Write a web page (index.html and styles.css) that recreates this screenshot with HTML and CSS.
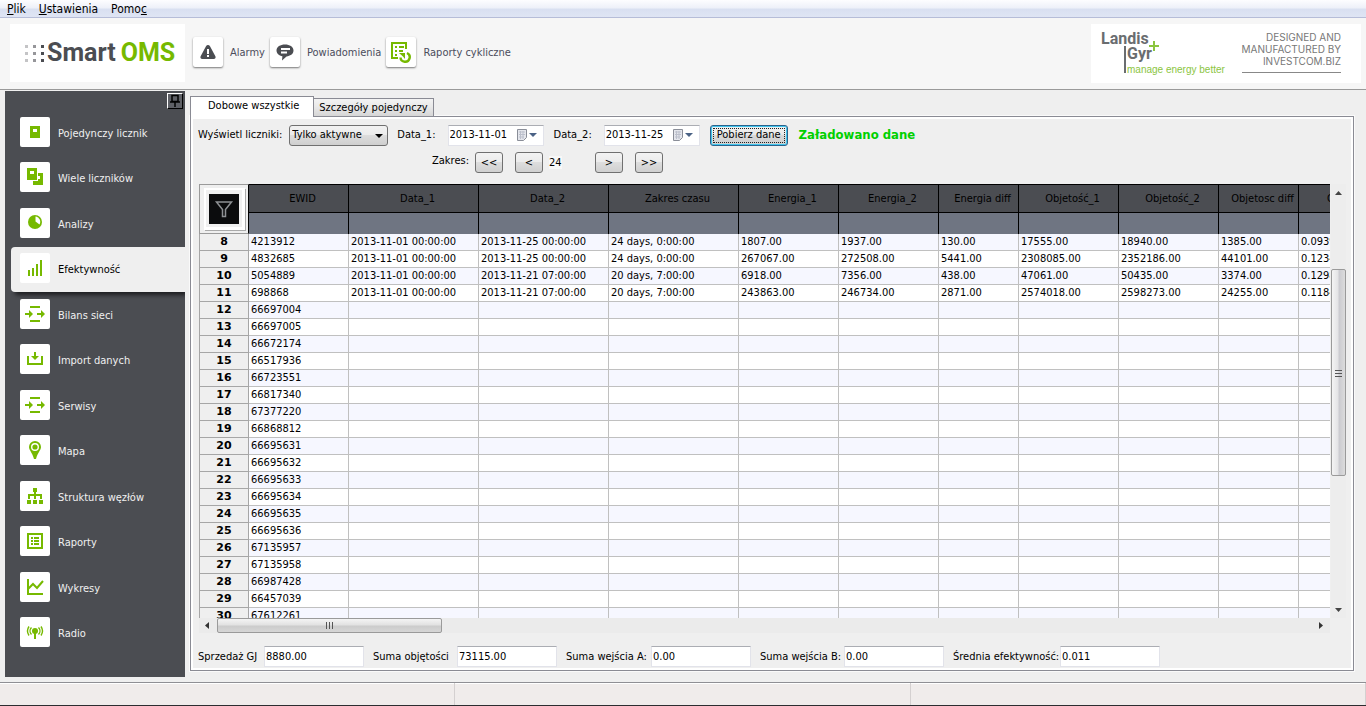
FILE: index.html
```html
<!DOCTYPE html>
<html lang="pl">
<head>
<meta charset="utf-8">
<title>Smart OMS</title>
<link rel="stylesheet" href="styles.css">
</head>
<body>
<nav class="menubar">
  <a href="#"><u>P</u>lik</a>
  <a href="#"><u>U</u>stawienia</a>
  <a href="#">Pomo<u>c</u></a>
</nav>

<header class="header">
  <div class="logo">
    <svg class="logo-dots" width="20" height="18" viewBox="0 0 20 18">
      <g fill="#c4c4c6"><path d="M0 1h3v3H0zM0 8h3v3H0zM0 15h3v3H0z"/></g>
      <g fill="#96969a"><path d="M8 1h3v3H8zM8 8h3v3H8zM8 15h3v3H8z"/></g>
      <g fill="#4b4d52"><path d="M16 1h3v3h-3zM16 8h3v3h-3zM16 15h3v3h-3z"/></g>
    </svg>
    <span class="logo-smart">Smart</span>
    <span class="logo-oms">OMS</span>
  </div>
  <div class="tools">
    <button class="tool" type="button">
      <span class="tool-icon">
        <svg width="18" height="16" viewBox="0 0 18 16"><path d="M9 1Q10.300 1 11 2.300L16.500 12.500Q17 14.800 14.800 15H3.200Q1 14.800 1.500 12.500L7 2.300Q7.700 1 9 1Z" fill="#4b4d52"/><path d="M8 5h2v5H8zM8 11h2v2H8z" fill="#fff"/></svg>
      </span>
      <span>Alarmy</span>
    </button>
    <button class="tool" type="button">
      <span class="tool-icon">
        <svg width="18" height="18" viewBox="0 0 18 18"><path d="M9 1.500C13.700 1.500 17.500 3.800 17.500 7.500S14 13 10.500 13.400L6 17.500 6.400 13.200C3 12.600.5 10.500.5 7.500.5 3.800 4.300 1.500 9 1.500Z" fill="#4b4d52"/><path d="M5 5h9v2H5zM5 8.500h6v2H5z" fill="#fff"/></svg>
      </span>
      <span>Powiadomienia</span>
    </button>
    <button class="tool" type="button">
      <span class="tool-icon">
        <svg width="22" height="22" viewBox="0 0 22 22"><path d="M8 17H2V2h14v6" fill="none" stroke="#76b900" stroke-width="2"/><path d="M5 5h2v2H5zM9 5h5v2H9zM5 9h2v2H5zM9 9h4v2H9zM5 13h2v2H5z" fill="#76b900"/><path d="M10.500 16.500A4.600 4.600 0 1 0 17 12" fill="none" stroke="#76b900" stroke-width="2.400"/><path d="M9 12h6v6l-2-2.500z" fill="#76b900"/></svg>
      </span>
      <span>Raporty cykliczne</span>
    </button>
  </div>
  <div class="brand">
    <div class="landis">
      <div class="landis-name">Landis</div>
      <div class="landis-gyr">Gyr</div>
      <div class="landis-tag">manage energy better</div>
      <svg class="landis-mark" width="60" height="44" viewBox="0 0 60 44"><path d="M23 15h2v27h-2z" fill="#6a6d70"/><path d="M52 10h2v10h-2zM48 14h10v2H48z" fill="#8bc53f"/></svg>
    </div>
    <div class="maker">DESIGNED AND<br>MANUFACTURED BY<br>INVESTCOM.BIZ</div>
  </div>
</header>

<main class="main">
  <aside class="sidebar">
    <button class="pin" type="button" aria-label="Przypnij">
      <svg width="14" height="14" viewBox="0 0 14 14"><path d="M4 1.500h6v6H4zM2 8h10M7 8v5" fill="none" stroke="#000" stroke-width="1.500"/></svg>
    </button>
    <a class="item" href="#"><span class="item-icon"><svg viewBox="0 0 30 30"><path fill-rule="evenodd" d="M10 9h10v12H10zM13 12v3h4v-3z"/></svg></span>Pojedynczy licznik</a>
    <a class="item" href="#"><span class="item-icon"><svg viewBox="0 0 30 30"><path fill-rule="evenodd" d="M7 6h10v12H7zM10 9v3h4V9z"/><path d="M18 11h5v12H13v-4h5v-2h2v-3h-2z"/></svg></span>Wiele liczników</a>
    <a class="item" href="#"><span class="item-icon"><svg viewBox="0 0 30 30"><circle cx="15" cy="14" r="7"/><path d="M15.500 13.500V8.500A5.300 5.300 0 0 1 19.500 16.500Z" fill="#fff"/></svg></span>Analizy</a>
    <a class="item active" href="#"><span class="item-icon"><svg viewBox="0 0 30 30"><path d="M8 17h2v6H8zM12 15h2v8h-2zM16 11h2v12h-2zM20 7h2v16h-2z"/></svg></span>Efektywność</a>
    <a class="item" href="#"><span class="item-icon"><svg viewBox="0 0 30 30"><path d="M10 7h10v2H10zM10 21h10v2H10zM5 14h4v-3l4 4-4 4v-3H5zM17 14h4v-3l4 4-4 4v-3h-4z"/></svg></span>Bilans sieci</a>
    <a class="item" href="#"><span class="item-icon"><svg viewBox="0 0 30 30"><path d="M7 12h2v7h12v-7h2v9H7zM14 8h2v4h3l-4 4-4-4h3z"/></svg></span>Import danych</a>
    <a class="item" href="#"><span class="item-icon"><svg viewBox="0 0 30 30"><path d="M10 7h10v2H10zM10 21h10v2H10zM5 14h4v-3l4 4-4 4v-3H5zM17 14h4v-3l4 4-4 4v-3h-4z"/></svg></span>Serwisy</a>
    <a class="item" href="#"><span class="item-icon"><svg viewBox="0 0 30 30"><path d="M15 6a6 6 0 0 1 6 6c0 3-3 5-5 12h-2c-2-7-5-9-5-12a6 6 0 0 1 6-6z"/><circle cx="15" cy="12" r="3.300" fill="none" stroke="#fff" stroke-width="1.400"/></svg></span>Mapa</a>
    <a class="item" href="#"><span class="item-icon"><svg viewBox="0 0 30 30"><path d="M13 7h4v4h-1v2h6v5h-2v-3h-4v3h-2v-3h-4v3H8v-5h6v-2h-1zM7 19h4v4H7zM13 19h4v4h-4zM19 19h4v4h-4z"/></svg></span>Struktura węzłów</a>
    <a class="item" href="#"><span class="item-icon"><svg viewBox="0 0 30 30"><path fill-rule="evenodd" d="M7 7h16v16H7zM9 9v12h12V9z"/><path d="M11 11h2v2h-2zM14 11h5v2h-5zM11 14h2v2h-2zM14 14h5v2h-5zM11 17h2v2h-2zM14 17h5v2h-5z"/></svg></span>Raporty</a>
    <a class="item" href="#"><span class="item-icon"><svg viewBox="0 0 30 30"><path d="M8 7v15h15M8 17l5-5 4 4 6-7" fill="none" stroke="#76b900" stroke-width="2"/></svg></span>Wykresy</a>
    <a class="item" href="#"><span class="item-icon"><svg viewBox="0 0 30 30"><circle cx="15" cy="14" r="3"/><path d="M14 15h2v7h-2z"/><path d="M11.500 10.500a5 5 0 0 0 0 7M9 9.500a8 8 0 0 0 0 9M18.500 10.500a5 5 0 0 1 0 7M21 9.500a8 8 0 0 1 0 9" fill="none" stroke="#76b900" stroke-width="1.400"/></svg></span>Radio</a>
  </aside>

  <section class="content">
    <div class="tabs">
      <button class="tab tab-active" type="button">Dobowe wszystkie</button>
      <button class="tab" type="button">Szczegóły pojedynczy</button>
    </div>
    <div class="panel">
      <div class="filters">
        <label class="show-label" for="show">Wyświetl liczniki:</label>
        <span class="select-wrap"><select id="show" class="select"><option>Tylko aktywne</option></select></span>
        <label for="date1">Data_1:</label>
        <span class="date">
          <input id="date1" type="text" value="2013-11-01">
          <svg width="22" height="14" viewBox="0 0 22 14"><path d="M1.500 1.500h9v8l-3 3h-6z" fill="#e4e6ec" stroke="#8a8e98"/><path d="M3 4h6M3 6.500h6M3 9h5M4.500 3v8M7 3v8" stroke="#bcc0cc"/><path d="M13 5h8l-4 4z" fill="#4a6285"/></svg>
        </span>
        <label for="date2">Data_2:</label>
        <span class="date">
          <input id="date2" type="text" value="2013-11-25">
          <svg width="22" height="14" viewBox="0 0 22 14"><path d="M1.500 1.500h9v8l-3 3h-6z" fill="#e4e6ec" stroke="#8a8e98"/><path d="M3 4h6M3 6.500h6M3 9h5M4.500 3v8M7 3v8" stroke="#bcc0cc"/><path d="M13 5h8l-4 4z" fill="#4a6285"/></svg>
        </span>
        <button class="fetch" type="button">Pobierz dane</button>
        <strong class="status">Załadowano dane</strong>
      </div>
      <div class="range">
        <span class="range-label">Zakres:</span>
        <button class="step" type="button">&lt;&lt;</button>
        <button class="step" type="button">&lt;</button>
        <span class="range-value"><span>24</span></span>
        <button class="step" type="button">&gt;</button>
        <button class="step" type="button">&gt;&gt;</button>
      </div>

      <div class="grid">
        <div class="viewport">
          <table class="data">
            <colgroup>
              <col class="w50"><col class="w100"><col class="w130"><col class="w130"><col class="w130"><col class="w100"><col class="w100"><col class="w80"><col class="w100"><col class="w100"><col class="w80"><col class="w100">
            </colgroup>
            <thead>
              <tr class="titles">
                <th class="corner" rowspan="2"><button class="funnel" type="button" aria-label="Filtr"><svg width="30" height="30" viewBox="0 0 30 30"><path d="M7.500 8h15l-6 7.500v7h-3v-7z" fill="none" stroke="#8e9194" stroke-width="1.500"/></svg></button></th>
                <th>EWID</th><th>Data_1</th><th>Data_2</th><th>Zakres czasu</th><th>Energia_1</th><th>Energia_2</th><th>Energia diff</th><th>Objetość_1</th><th>Objetość_2</th><th>Objetosc diff</th><th class="cut">O</th>
              </tr>
              <tr class="searches"><td></td><td></td><td></td><td></td><td></td><td></td><td></td><td></td><td></td><td></td><td></td></tr>
            </thead>
            <tbody id="rows"></tbody>
          </table>
        </div>
        <div class="vbar">
          <svg width="7" height="4" viewBox="0 0 7 4"><path d="M0 4h7L3.500 0z" fill="#444"/></svg>
          <div class="vtrack"><div class="vthumb"><i></i><i></i><i></i></div></div>
          <svg width="7" height="4" viewBox="0 0 7 4"><path d="M0 0h7L3.500 4z" fill="#444"/></svg>
        </div>
        <div class="hbar">
          <svg width="4" height="7" viewBox="0 0 4 7"><path d="M4 0v7L0 3.500z" fill="#333"/></svg>
          <div class="htrack"><div class="hthumb"><i></i><i></i><i></i></div></div>
          <svg width="4" height="7" viewBox="0 0 4 7"><path d="M0 0v7L4 3.500z" fill="#333"/></svg>
        </div>
      </div>

      <div class="sums">
        <label for="s1">Sprzedaż GJ</label><input id="s1" type="text" value="8880.00">
        <label for="s2">Suma objętości</label><input id="s2" type="text" value="73115.00">
        <label for="s3">Suma wejścia A:</label><input id="s3" type="text" value="0.00">
        <label for="s4">Suma wejścia B:</label><input id="s4" type="text" value="0.00">
        <label for="s5">Średnia efektywność:</label><input id="s5" type="text" value="0.011">
      </div>
    </div>
  </section>
</main>

<footer class="statusbar"><div></div><div></div><div></div></footer>
<script src="rows.js"></script>
</body>
</html>
```

FILE: styles.css
```css
* { box-sizing: border-box; }

body {
  margin: 0;
  min-height: 100vh;
  display: flex;
  flex-direction: column;
  background: #efefef;
  color: #000;
  font: 11px/14px "DejaVu Sans Condensed", "Noto Sans", sans-serif;
}

button, input, select { font: inherit; color: inherit; }

.menubar {
  display: flex;
  gap: 13px;
  height: 18px;
  padding: 2px 7px;
  font-size: 12px;
  background: linear-gradient(#fdfdff, #eef1f9 45%, #d9e0f1 55%, #dfe5f4);
  border-bottom: 1px solid #b6bdd8;
}
.menubar a { color: #000; text-decoration: none; }

.header {
  display: flex;
  align-items: center;
  height: 72px;
  padding: 0 5px 1px 10px;
  background: #f6f6f6;
  border-bottom: 1px solid #9a9a9a;
}

.logo {
  display: flex;
  align-items: center;
  width: 175px;
  height: 58px;
  padding-left: 15px;
  background: #fff;
  font: bold 25px/30px Roboto, sans-serif;
}
.logo-smart { margin: 0 5px 0 2px; color: #4b4d52; }
.logo-oms { color: #76b900; }

.tools { display: flex; gap: 5px; padding-left: 8px; }
.tool {
  display: flex;
  align-items: center;
  gap: 7px;
  padding: 0;
  border: 0;
  background: none;
  color: #4b4d5c;
}
.tool-icon {
  display: grid;
  place-items: center;
  width: 30px;
  height: 30px;
  margin-bottom: 2px;
  border-radius: 2px;
  background: #fff;
  box-shadow: 0 1px 2px #777;
}

.brand {
  display: flex;
  justify-content: space-between;
  margin-left: auto;
  width: 270px;
  height: 59px;
  padding: 7px 20px 10px 10px;
  background: #fff;
}
.landis {
  position: relative;
  color: #6a6d70;
  font: bold 16px/16px Roboto, sans-serif;
}
.landis-gyr { padding-left: 26px; line-height: 14px; }
.landis-tag {
  padding: 3px 0 0 26px;
  color: #8bc53f;
  font: 10px/12px "Liberation Sans", sans-serif;
}
.landis-mark { position: absolute; left: 0; top: 0; }
.maker {
  border-bottom: 1px solid #888;
  color: #777;
  text-align: right;
  font: 10px/12px Inter, sans-serif;
}

.main {
  display: flex;
  flex: 1;
  gap: 5px;
  padding: 1px 11px 5px 5px;
}

.sidebar {
  position: relative;
  display: flex;
  flex-direction: column;
  width: 180px;
  padding: 19px 0 21px 6px;
  background: #4b4d52;
}
.pin {
  position: absolute;
  top: 2px;
  right: 2px;
  display: grid;
  place-items: center;
  width: 16px;
  height: 16px;
  padding: 0;
  border: 1px solid;
  border-color: #fff #000 #000 #fff;
  background: #5e6066;
}
.item {
  display: flex;
  flex: 1;
  align-items: center;
  gap: 8px;
  padding: 2px 0 0 9px;
  color: #f0f0f0;
  text-decoration: none;
}
.item-icon {
  width: 30px;
  height: 30px;
  margin-bottom: 4px;
  border-radius: 2px;
  background: #fff;
}
.item-icon svg { display: block; fill: #76b900; }
.active {
  border-radius: 4px 0 0 4px;
  background: #efefef;
  color: #000;
  box-shadow: 3px 4px 4px -1px #1d1e21;
  clip-path: inset(0 0 -8px 0);
}

.content {
  display: flex;
  flex: 1;
  flex-direction: column;
  min-width: 0;
  padding: 5px 1px 6px 0;
}
.tabs { display: flex; align-items: flex-end; height: 21px; z-index: 1; }
.tab {
  height: 19px;
  padding: 0 5px;
  border: 1px solid #8a8b94;
  border-left: 0;
  background: linear-gradient(#f3f3f3, #e9e9e9 45%, #d6d6d6);
}
.tab-active {
  height: 21px;
  padding: 0 14px 2px 17px;
  border-left: 1px solid #8a8b94;
  border-bottom: 0;
  background: #fff;
}
.panel {
  display: flex;
  flex: 1;
  flex-direction: column;
  margin-top: -1px;
  padding: 7px 4px 2px 5px;
  border: 1px solid #8a8b94;
  outline: 1px solid #fafafa;
  box-shadow: inset 0 0 0 2px #fff;
}

.filters { display: flex; align-items: center; height: 22px; padding-left: 2px; }
.filters label { margin-right: 12px; }
.filters .show-label { margin-right: 7px; }
.select-wrap { position: relative; margin-right: 9px; }
.select-wrap::after {
  content: "";
  position: absolute;
  right: 5px;
  top: 9px;
  border: 4px solid transparent;
  border-top-color: #000;
  pointer-events: none;
}
.select {
  appearance: none;
  display: block;
  width: 99px;
  height: 21px;
  padding: 0 2px;
  border: 1px solid #707070;
  border-radius: 3px;
  background: linear-gradient(#f2f2f2, #ebebeb 49%, #dcdcdc 50%, #cfcfcf);
}
.date {
  display: flex;
  align-items: center;
  width: 96px;
  height: 21px;
  margin-right: 10px;
  border: 1px solid #e2e3ea;
  border-top-color: #abadb3;
  background: #fff;
}
.date input { width: 67px; padding: 0 1px; border: 0; background: none; }
.fetch {
  height: 21px;
  margin: 0 11px 0 0;
  padding: 0 6px;
  border: 1px solid #2c628b;
  border-radius: 3px;
  background: linear-gradient(#f2f2f2, #e8e8e8 49%, #d8d8d8 50%, #cfcfcf);
  box-shadow: inset 0 0 0 1px #3fc5ee;
  outline: 1px dotted #222;
  outline-offset: -4px;
}
.status { color: #00d000; font: bold 13px/16px "DejaVu Sans Condensed", sans-serif; }

.range {
  display: flex;
  align-items: center;
  height: 21px;
  margin: 6px 0 11px;
  padding-left: 236px;
}
.range-label { width: 43px; padding-bottom: 4px; }
.step {
  width: 28px;
  height: 21px;
  margin-right: 12px;
  padding: 0;
  border: 1px solid #707070;
  border-radius: 3px;
  background: linear-gradient(#f3f3f3, #ebebeb 49%, #dddddd 50%, #d0d0d0);
}
.range-value { width: 46px; margin-left: -6px; }
.range-value span { background: #f8f8f8; }

.grid {
  display: grid;
  grid-template: minmax(0, 1fr) 16px / minmax(0, 1fr) 16px;
  flex: 1 0 448px;
  padding: 0 3px;
}
.viewport { overflow: hidden; contain: size; }
.data {
  width: 1200px;
  table-layout: fixed;
  border-collapse: separate;
  border-spacing: 0;
}
.w50 { width: 50px; }
.w80 { width: 80px; }
.w100 { width: 100px; }
.w130 { width: 130px; }

.titles th {
  height: 29px;
  padding: 0 0 0 8px;
  border: solid #000;
  border-width: 1px 1px 1px 0;
  background: #4b4d52;
  font-weight: normal;
}
.titles .cut { padding-left: 28px; text-align: left; }
.titles .corner {
  padding: 3px;
  border: 1px solid #9a9a9a;
  border-right-color: #000;
  background: #efefef;
}
.funnel {
  display: grid;
  place-items: center;
  width: 41px;
  height: 42px;
  margin: auto;
  padding: 0;
  border: 1px solid #fff;
  border-width: 2px 3px 3px 2px;
  background: #f0f0f0;
  box-shadow: 1px 1px 0 #aaa;
}
.funnel svg { background: #0b0c0d; }
.searches td {
  height: 21px;
  padding: 0;
  border-right: 1px solid #000;
  background: #6f7582;
}
.data tbody th, .data tbody td {
  height: 17px;
  padding: 0 2px;
  border: solid #c0c0c0;
  border-width: 0 1px 1px 0;
  line-height: 14px;
  white-space: nowrap;
  text-align: left;
  background: #fff;
}
.data tbody tr:nth-child(odd) td { background: #f6f7ff; }
.data tbody th {
  border-color: #a6a6a6;
  border-left-width: 1px;
  background: #efefef;
  text-align: center;
  font: bold 11px/14px "DejaVu Sans", sans-serif;
}

.vbar {
  display: flex;
  flex-direction: column;
  align-items: center;
  width: 15px;
  margin-left: 1px;
  padding: 7px 0 6px;
  background: #ededed;
}
.vtrack {
  flex: 1;
  display: flex;
  flex-direction: column;
  width: 100%;
  padding: 74px 0 132px;
}
.vthumb, .hthumb {
  display: flex;
  align-items: center;
  justify-content: center;
  gap: 1px;
  border: 1px solid #9a9a9a;
  border-radius: 2px;
}
.vthumb {
  flex: 1;
  flex-direction: column;
  background: linear-gradient(90deg, #f4f4f4, #e4e4e6 45%, #cbcbd0 55%, #dcdcdc);
}
.vthumb i { width: 7px; height: 2px; border-bottom: 1px solid #555; }
.hbar {
  display: flex;
  align-items: center;
  height: 15px;
  padding: 0 7px 0 6px;
  background: #ebebeb;
}
.htrack { flex: 1; padding: 0 0 0 8px; }
.hthumb {
  width: 20.4%;
  height: 15px;
  background: linear-gradient(#f4f4f4, #e2e2e2 45%, #cccccc 55%, #d6d6d6);
}
.hthumb i { width: 2px; height: 7px; border-right: 1px solid #555; }

.sums {
  display: grid;
  grid-template-columns: 66px 100px 93px 100px 94px 100px 93px 100px 116px 100px;
  align-items: center;
  height: 34px;
  padding: 11px 0 1px 2px;
}
.sums label { padding-top: 2px; }
.sums input {
  width: 100%;
  height: 21px;
  padding: 0 1px;
  border: 1px solid #e2e3ea;
  border-top-color: #abadb3;
  background: #fff;
}
.sums input + label { padding-left: 9px; }

.statusbar {
  display: flex;
  height: 24px;
  border-top: 1px solid #8f8f94;
  border-bottom: 1px solid #2c2d30;
  box-shadow: inset 0 1px 0 #fff;
  background: #f0eceb;
}
.statusbar div { flex: 1; border-right: 1px solid #d4d0d0; }
```

FILE: rows.js
```
const measured = [
  ["4213912", "2013-11-01 00:00:00", "2013-11-25 00:00:00", "24 days, 0:00:00", "1807.00", "1937.00", "130.00", "17555.00", "18940.00", "1385.00", "0.0939"],
  ["4832685", "2013-11-01 00:00:00", "2013-11-25 00:00:00", "24 days, 0:00:00", "267067.00", "272508.00", "5441.00", "2308085.00", "2352186.00", "44101.00", "0.1234"],
  ["5054889", "2013-11-01 00:00:00", "2013-11-21 07:00:00", "20 days, 7:00:00", "6918.00", "7356.00", "438.00", "47061.00", "50435.00", "3374.00", "0.1298"],
  ["698868", "2013-11-01 00:00:00", "2013-11-21 07:00:00", "20 days, 7:00:00", "243863.00", "246734.00", "2871.00", "2574018.00", "2598273.00", "24255.00", "0.1184"]
];
const pending = ["66697004", "66697005", "66672174", "66517936", "66723551", "66817340", "67377220", "66868812", "66695631", "66695632", "66695633", "66695634", "66695635", "66695636", "67135957", "67135958", "66987428", "66457039", "67612261"];

const body = document.getElementById("rows");
const all = measured.concat(pending.map(id => [id]));
all.forEach((values, index) => {
  const row = body.insertRow();
  const head = document.createElement("th");
  head.scope = "row";
  head.textContent = index + 8;
  row.append(head);
  for (let i = 0; i < 11; i++) {
    row.insertCell().textContent = values[i] || "";
  }
});
```
